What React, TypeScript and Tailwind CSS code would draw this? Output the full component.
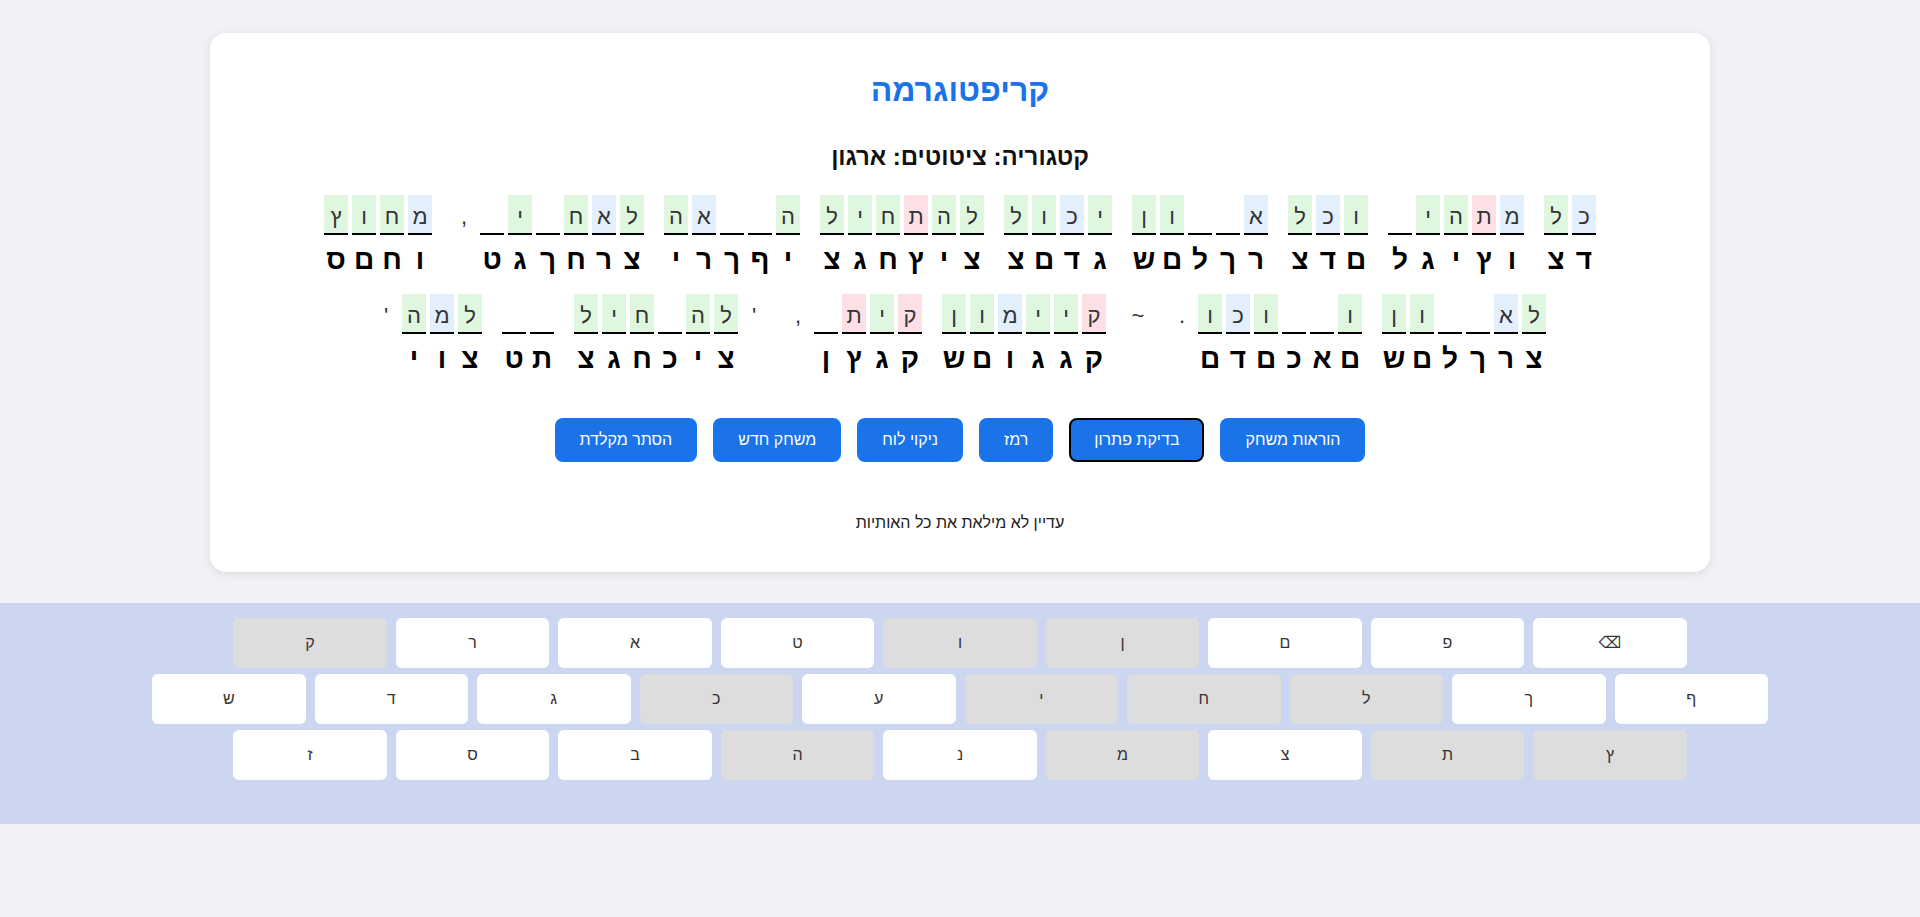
const FONT = "font-['Liberation_Sans',Arial,sans-serif]";

// [plain guess, cipher, colour per cell]  g=green b=blue r=red -=empty p=punctuation
const WORDS: [string, string, string][] = [
  ["כל", "דצ", "bg"],
  ["מתהי_", "וץיגל", "brgg-"],
  ["וכל", "םדצ", "gbg"],
  ["א__ון", "רךלםש", "b--gg"],
  ["יכול", "גדםצ", "gbgg"],
  ["להתחיל", "ציץחגצ", "ggrggg"],
  ["ה__אה", "יףךרי", "g--bg"],
  ["לאח_י_,", "צרחךגט ", "gbg-g-p"],
  ["מחוץ", "וחםס", "bggg"],
  ["לא__ון", "צרךלםש", "gb--gg"],
  ["ו__וכו.", "םאכםדם ", "g--gbgp"],
  ["~", " ", "p"],
  ["קיימון", "קגגוםש", "rggbgg"],
  ["קית_,", "קגץן ", "rgr-p"],
  ["'לה_חיל", " ציכחגצ", "pgg-ggg"],
  ["__", "תט", "--"],
  ["למה'", "צוי ", "gbgp"],
];

const BG: Record<string, string> = {
  g: "bg-[#dff7df]",
  b: "bg-[#e3effd]",
  r: "bg-[#fde0e5]",
  "-": "bg-transparent",
  p: "bg-transparent",
};

const KEYS: [string, boolean][][] = [
  [["ק", true], ["ר", false], ["א", false], ["ט", false], ["ו", true], ["ן", true], ["ם", false], ["פ", false], ["⌫", false]],
  [["ש", false], ["ד", false], ["ג", false], ["כ", true], ["ע", false], ["י", true], ["ח", true], ["ל", true], ["ך", false], ["ף", false]],
  [["ז", false], ["ס", false], ["ב", false], ["ה", true], ["נ", false], ["מ", true], ["צ", false], ["ת", true], ["ץ", true]],
];

const BUTTONS = ["הוראות משחק", "בדיקת פתרון", "רמז", "ניקוי לוח", "משחק חדש", "הסתר מקלדת"];

function Cell({ p, c, t }: { p: string; c: string; t: string }) {
  const punct = t === "p";
  return (
    <div className="flex w-6 flex-col items-center">
      <div
        className={`flex h-10 w-6 justify-center border-b-2 pt-[11px] text-[22px] leading-[22px] text-[#333] ${BG[t]} ${
          punct ? "border-transparent" : "border-black"
        }`}
      >
        {p === "_" ? "" : p}
      </div>
      <div className="mt-[11px] h-7 text-[28px] font-bold leading-7 text-black">{c.trim()}</div>
    </div>
  );
}

export default function App() {
  return (
    <div className={`min-h-screen bg-[#f0f2f5] pt-[33px] ${FONT}`} dir="rtl">
      <div className="mx-auto w-[1500px] rounded-2xl bg-white px-[30px] pt-[38px] pb-[37px] shadow-[0_2px_10px_rgba(0,0,0,0.1)]">
        <h1 className="text-center text-[32px] font-bold leading-[38px] text-[#1a73e8]">קריפטוגרמה</h1>
        <h2 className="mt-[34px] text-center text-[24px] font-bold leading-[28px] text-[#111]">קטגוריה: ציטוטים: ארגון</h2>

        <div className="mx-auto mt-[24px] flex max-w-[1360px] flex-wrap justify-center gap-x-5 gap-y-5">
          {WORDS.map(([p, c, t], i) => {
            const ps = Array.from(p);
            const cs = Array.from(c);
            return (
              <div key={i} className="flex gap-1">
                {ps.map((ch, j) => (
                  <Cell key={j} p={ch} c={cs[j] ?? " "} t={t[j]} />
                ))}
              </div>
            );
          })}
        </div>

        <div className="mt-[45px] flex justify-center gap-4">
          {BUTTONS.map((b) => (
            <button
              key={b}
              className={`h-11 rounded-lg bg-[#1a73e8] text-[16px] text-white ${
                b === "בדיקת פתרון" ? "border-2 border-black px-[23px]" : "px-[25px]"
              }`}
            >
              {b}
            </button>
          ))}
        </div>

        <p className="mt-[49px] text-center text-[16px] leading-6 text-[#222]">עדיין לא מילאת את כל האותיות</p>
      </div>

      <div className="mt-[31px] flex flex-col items-center gap-[6px] bg-[#ccd6f0] pt-[15px] pb-[44px]" dir="ltr">
        {KEYS.map((row, i) => (
          <div key={i} className="flex gap-[9px]">
            {row.map(([k, used]) => (
              <div
                key={k}
                className={`flex h-[50px] w-[153.5px] items-center justify-center rounded-md text-[16px] text-[#333] ${
                  used ? "bg-[#dddddd]" : "bg-white"
                } ${k === "⌫" ? "font-['DejaVu_Sans'] text-[15px]" : ""}`}
              >
                {k}
              </div>
            ))}
          </div>
        ))}
      </div>
    </div>
  );
}
